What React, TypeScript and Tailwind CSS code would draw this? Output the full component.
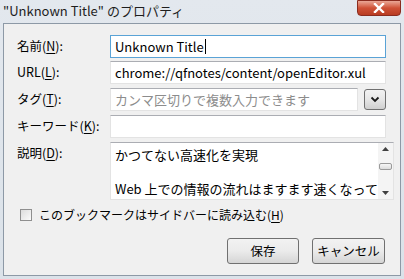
import React from "react";

const font = { fontFamily: '"Noto Sans CJK JP", "Noto Sans", sans-serif' };

function Label({ text, k }: { text: string; k: string }) {
  const i = text.indexOf("(" + k + ")");
  return (
    <div className="w-[93px] shrink-0 text-[12.5px] text-black leading-none">
      {text.slice(0, i + 1)}
      <span className="underline underline-offset-2">{k}</span>
      {text.slice(i + 2)}
    </div>
  );
}

export default function App() {
  return (
    <div
      className="relative w-[404px] h-[279px] bg-gradient-to-b from-[#e3e8ee] to-[#dbe2e9] overflow-hidden"
      style={font}
    >
      {/* title bar */}
      <div className="h-[23px] flex items-center pl-[3px] text-[13px] text-[#1e1e1e] leading-none pb-[2px]">
        "Unknown Title" のプロパティ
      </div>
      <div className="absolute right-[3px] top-0 w-[44px] h-[16px] rounded-b-[4px] border border-[#8a2c1f] bg-gradient-to-b from-[#e9a796] via-[#cf5136] to-[#b83c22] flex items-center justify-center">
        <svg width="12" height="10" viewBox="0 0 12 10">
          <path d="M2 1 L10 9 M10 1 L2 9" stroke="#fff" strokeWidth="2.4" strokeLinecap="square" />
        </svg>
      </div>

      {/* content */}
      <div className="absolute left-[3px] right-[3px] top-[23px] bottom-[3px] bg-[#f0f0f0] border border-[#8d99a6] pl-[13px] pr-[14px] pt-[11px] flex flex-col">
        <div className="flex items-center h-[23px]">
          <Label text="名前(N):" k="N" />
          <div className="flex-1 h-[23px] bg-white border border-[#5aa3d6] flex items-center pl-[4px] text-[13px] text-black">
            Unknown Title<span className="w-px h-[15px] bg-black ml-[1px]" />
          </div>
        </div>
        <div className="flex items-center h-[23px] mt-[3px]">
          <Label text="URL(L):" k="L" />
          <div className="flex-1 h-[23px] bg-white border border-[#e3e3e3] border-t-[#abadb3] flex items-center pl-[4px] text-[13px] text-black">
            chrome://qfnotes/content/openEditor.xul
          </div>
        </div>
        <div className="flex items-center h-[23px] mt-[4px]">
          <Label text="タグ(T):" k="T" />
          <div className="flex-1 h-[23px] bg-white border border-[#e3e3e3] border-t-[#abadb3] flex items-center pl-[4px] text-[13px] text-[#8c8c8c]">
            カンマ区切りで複数入力できます
          </div>
          <div className="ml-[6px] w-[22px] h-[21px] rounded-[3px] border border-[#707070] bg-gradient-to-b from-[#f2f2f2] via-[#e6e6e6] to-[#cfcfcf] flex items-center justify-center">
            <svg width="10" height="7" viewBox="0 0 10 7">
              <path d="M1.5 1.5 L5 5 L8.5 1.5" stroke="#1a1a1a" strokeWidth="1.8" fill="none" />
            </svg>
          </div>
        </div>
        <div className="flex items-center h-[23px] mt-[4px]">
          <Label text="キーワード(K):" k="K" />
          <div className="flex-1 h-[23px] bg-white border border-[#e3e3e3] border-t-[#abadb3]" />
        </div>
        <div className="flex items-start mt-[4px]">
          <div className="pt-[5px]">
            <Label text="説明(D):" k="D" />
          </div>
          <div className="flex-1 h-[58px] bg-white border border-[#e3e3e3] border-t-[#abadb3] flex">
            <div className="flex-1 pl-[4px] pt-[3px] text-[13px] text-black leading-[17px] overflow-hidden">
              <div>かつてない高速化を実現</div>
              <div>&nbsp;</div>
              <div className="whitespace-nowrap">Web 上での情報の流れはますます速くなって</div>
            </div>
            <div className="w-[15px] bg-[#f4f4f4] flex flex-col items-center justify-between py-[4px]">
              <svg width="7" height="4" viewBox="0 0 7 4">
                <path d="M0 4 L3.5 0 L7 4 Z" fill="#404040" />
              </svg>
              <div className="w-[13px] h-[7px] -mt-[10px] rounded-[2px] border border-[#9a9a9a] bg-gradient-to-b from-[#f6f6f6] to-[#dcdcdc]" />
              <svg width="7" height="4" viewBox="0 0 7 4">
                <path d="M0 0 L3.5 4 L7 0 Z" fill="#404040" />
              </svg>
            </div>
          </div>
        </div>
        <div className="flex items-center mt-[7px] h-[16px] pl-[3px]">
          <div className="w-[12px] h-[12px] border border-[#8f8f8f] bg-gradient-to-br from-[#dcdcdc] to-[#fbfbfb]" />
          <div className="ml-[7px] text-[12px] text-black leading-none">
            このブックマークはサイドバーに読み込む(<span className="underline underline-offset-2">H</span>)
          </div>
        </div>
        <div className="flex justify-end mt-[15px] gap-[13px] pr-[1px]">
          <div className="w-[72px] h-[26px] rounded-[3px] border border-[#707070] bg-gradient-to-b from-[#f2f2f2] via-[#ebebeb] to-[#d5d5d5] flex items-center justify-center text-[12.5px] text-black">
            保存
          </div>
          <div className="w-[73px] h-[26px] rounded-[3px] border border-[#707070] bg-gradient-to-b from-[#f2f2f2] via-[#ebebeb] to-[#d5d5d5] flex items-center justify-center text-[12.5px] text-black">
            キャンセル
          </div>
        </div>
      </div>
    </div>
  );
}
